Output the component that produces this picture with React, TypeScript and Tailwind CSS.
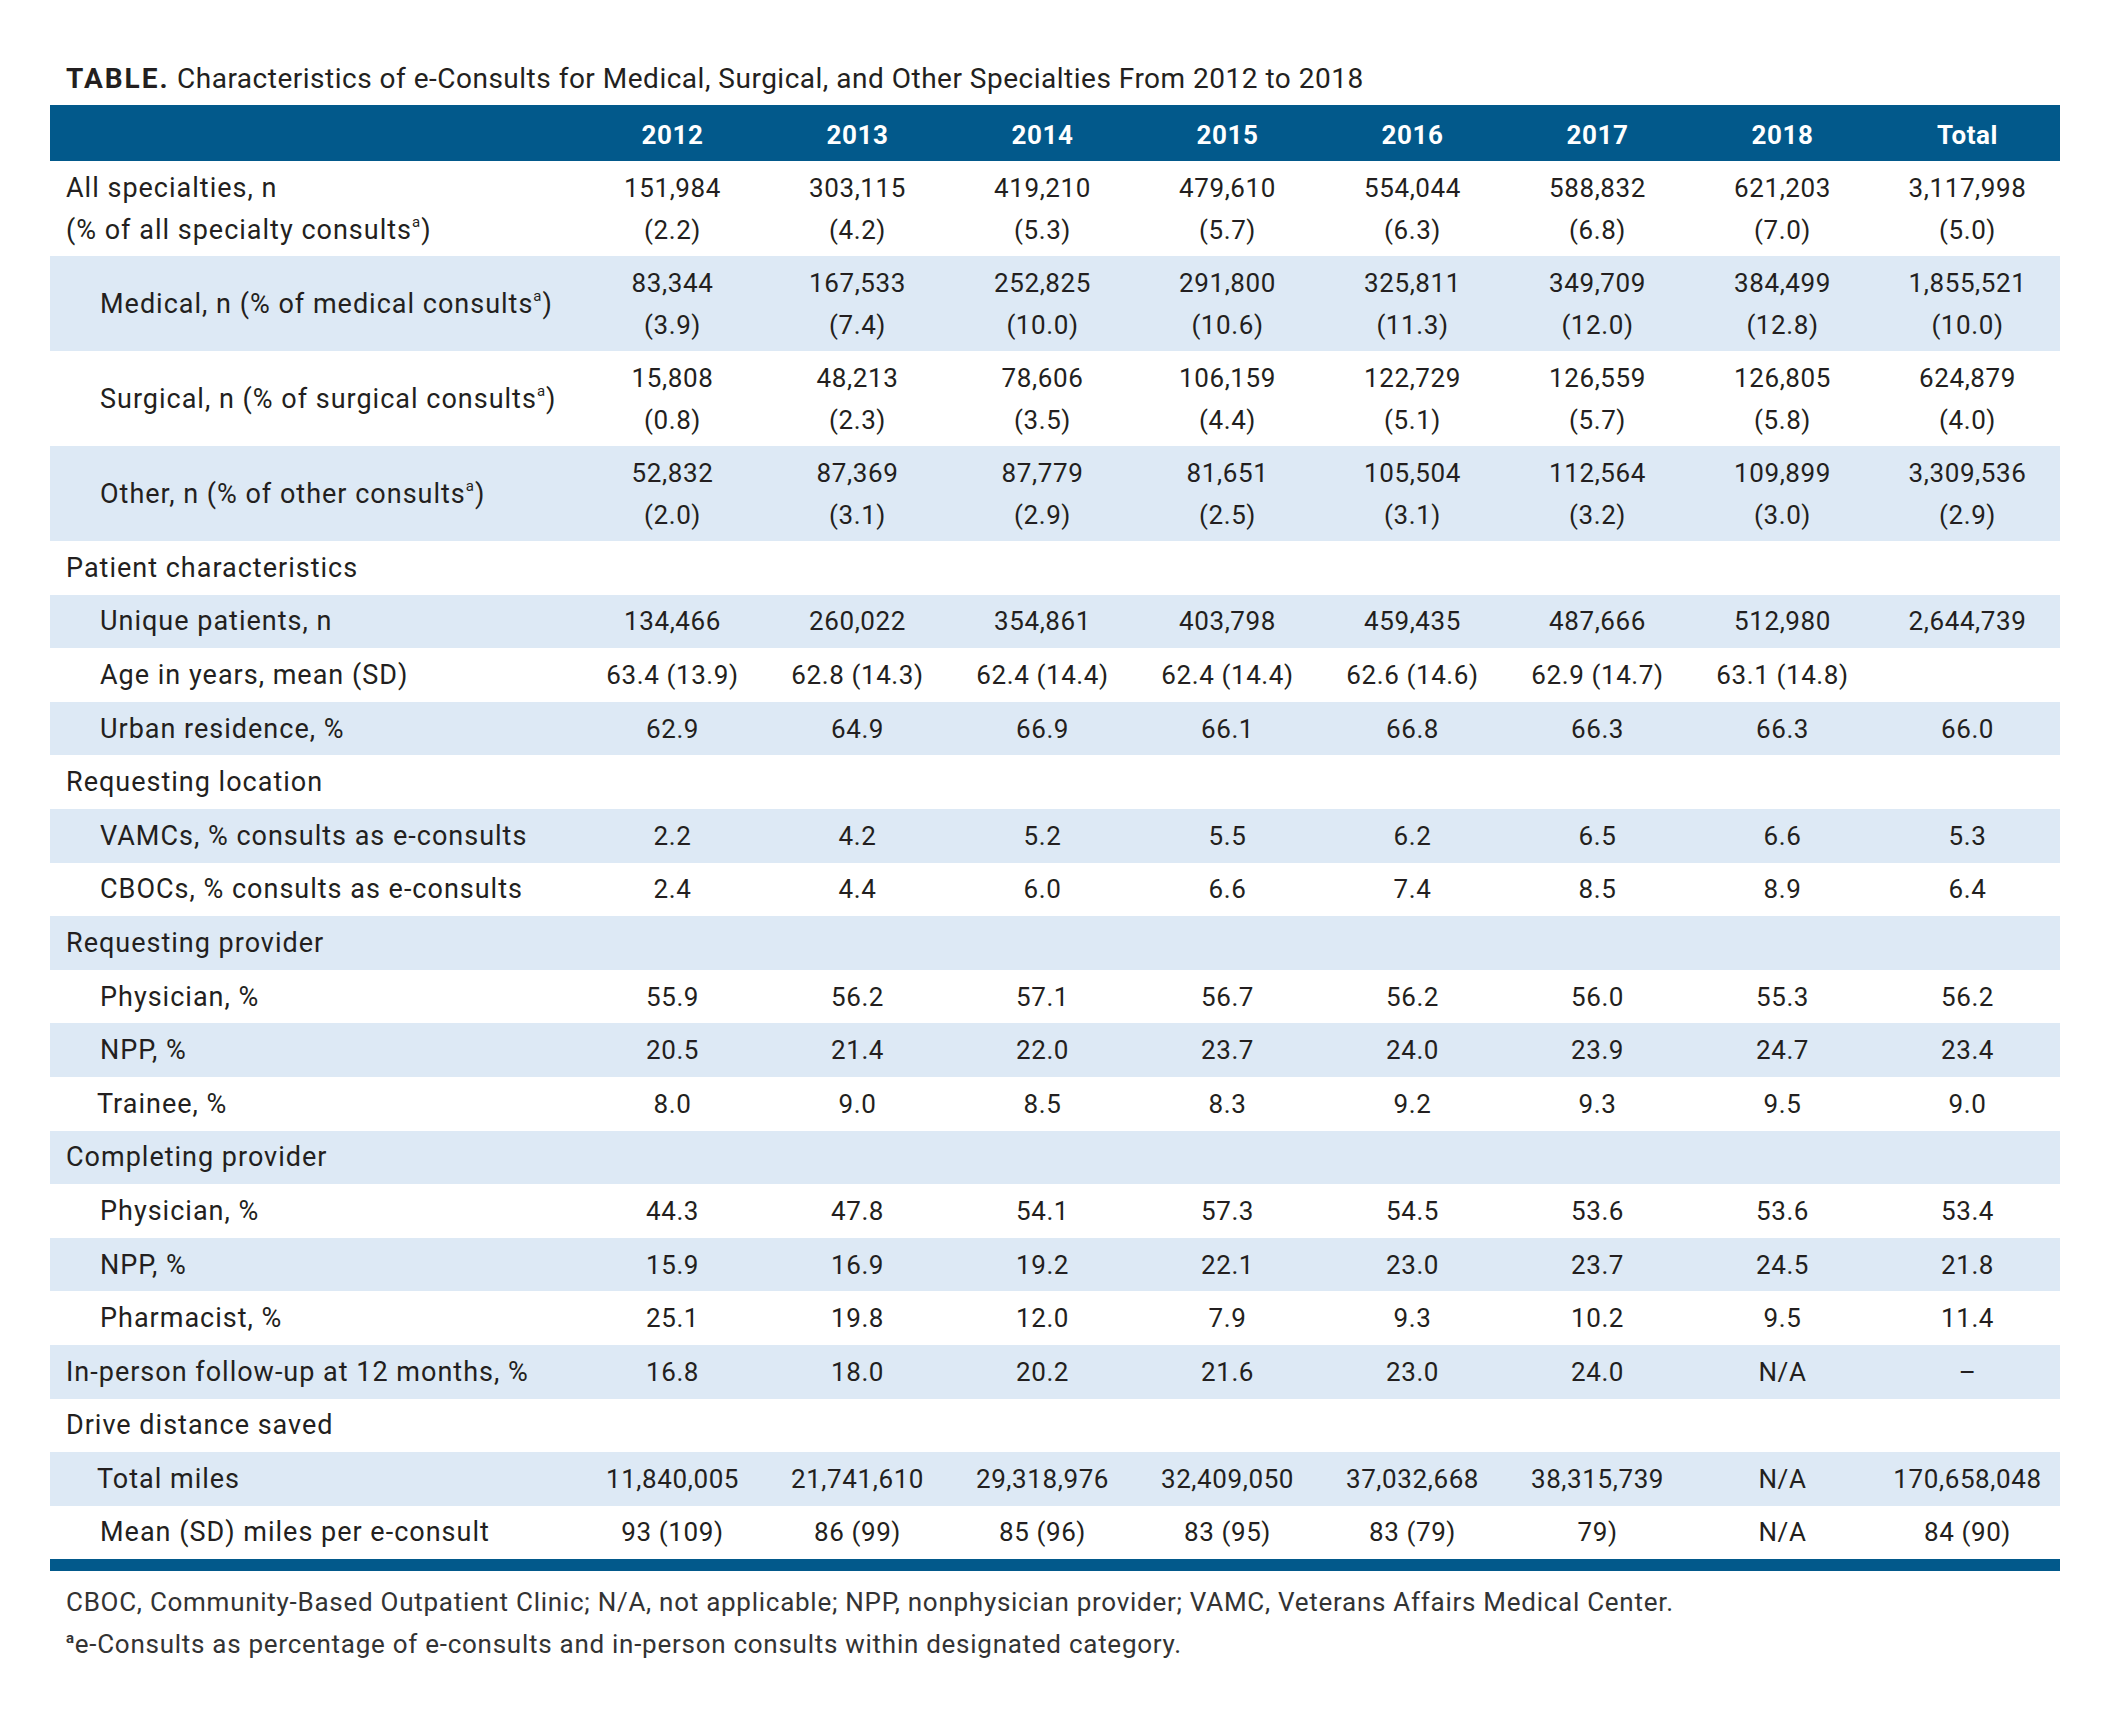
import React from 'react';

type Row = {
  label: React.ReactNode;
  values?: string[][];
  indent?: 'none' | 'sub' | 'subT';
  shaded?: boolean;
  tall?: boolean;
};

const years = ['2012', '2013', '2014', '2015', '2016', '2017', '2018', 'Total'];

const Sup = () => <sup className="text-[15px] top-[-0.75em]">a</sup>;

const rows: Row[] = [
  {
    label: (
      <>
        <div>All specialties, n</div>
        <div>
          (% of all specialty consults<Sup />)
        </div>
      </>
    ),
    tall: true,
    values: [
      ['151,984', '(2.2)'],
      ['303,115', '(4.2)'],
      ['419,210', '(5.3)'],
      ['479,610', '(5.7)'],
      ['554,044', '(6.3)'],
      ['588,832', '(6.8)'],
      ['621,203', '(7.0)'],
      ['3,117,998', '(5.0)'],
    ],
  },
  {
    label: (
      <div>
        Medical, n (% of medical consults<Sup />)
      </div>
    ),
    indent: 'sub',
    shaded: true,
    tall: true,
    values: [
      ['83,344', '(3.9)'],
      ['167,533', '(7.4)'],
      ['252,825', '(10.0)'],
      ['291,800', '(10.6)'],
      ['325,811', '(11.3)'],
      ['349,709', '(12.0)'],
      ['384,499', '(12.8)'],
      ['1,855,521', '(10.0)'],
    ],
  },
  {
    label: (
      <div>
        Surgical, n (% of surgical consults<Sup />)
      </div>
    ),
    indent: 'sub',
    tall: true,
    values: [
      ['15,808', '(0.8)'],
      ['48,213', '(2.3)'],
      ['78,606', '(3.5)'],
      ['106,159', '(4.4)'],
      ['122,729', '(5.1)'],
      ['126,559', '(5.7)'],
      ['126,805', '(5.8)'],
      ['624,879', '(4.0)'],
    ],
  },
  {
    label: (
      <div>
        Other, n (% of other consults<Sup />)
      </div>
    ),
    indent: 'sub',
    shaded: true,
    tall: true,
    values: [
      ['52,832', '(2.0)'],
      ['87,369', '(3.1)'],
      ['87,779', '(2.9)'],
      ['81,651', '(2.5)'],
      ['105,504', '(3.1)'],
      ['112,564', '(3.2)'],
      ['109,899', '(3.0)'],
      ['3,309,536', '(2.9)'],
    ],
  },
  { label: 'Patient characteristics' },
  {
    label: 'Unique patients, n',
    indent: 'sub',
    shaded: true,
    values: [['134,466'], ['260,022'], ['354,861'], ['403,798'], ['459,435'], ['487,666'], ['512,980'], ['2,644,739']],
  },
  {
    label: 'Age in years, mean (SD)',
    indent: 'sub',
    values: [
      ['63.4 (13.9)'],
      ['62.8 (14.3)'],
      ['62.4 (14.4)'],
      ['62.4 (14.4)'],
      ['62.6 (14.6)'],
      ['62.9 (14.7)'],
      ['63.1 (14.8)'],
      [''],
    ],
  },
  {
    label: 'Urban residence, %',
    indent: 'sub',
    shaded: true,
    values: [['62.9'], ['64.9'], ['66.9'], ['66.1'], ['66.8'], ['66.3'], ['66.3'], ['66.0']],
  },
  { label: 'Requesting location' },
  {
    label: 'VAMCs, % consults as e-consults',
    indent: 'sub',
    shaded: true,
    values: [['2.2'], ['4.2'], ['5.2'], ['5.5'], ['6.2'], ['6.5'], ['6.6'], ['5.3']],
  },
  {
    label: 'CBOCs, % consults as e-consults',
    indent: 'sub',
    values: [['2.4'], ['4.4'], ['6.0'], ['6.6'], ['7.4'], ['8.5'], ['8.9'], ['6.4']],
  },
  { label: 'Requesting provider', shaded: true },
  {
    label: 'Physician, %',
    indent: 'sub',
    values: [['55.9'], ['56.2'], ['57.1'], ['56.7'], ['56.2'], ['56.0'], ['55.3'], ['56.2']],
  },
  {
    label: 'NPP, %',
    indent: 'sub',
    shaded: true,
    values: [['20.5'], ['21.4'], ['22.0'], ['23.7'], ['24.0'], ['23.9'], ['24.7'], ['23.4']],
  },
  {
    label: 'Trainee, %',
    indent: 'subT',
    values: [['8.0'], ['9.0'], ['8.5'], ['8.3'], ['9.2'], ['9.3'], ['9.5'], ['9.0']],
  },
  { label: 'Completing provider', shaded: true },
  {
    label: 'Physician, %',
    indent: 'sub',
    values: [['44.3'], ['47.8'], ['54.1'], ['57.3'], ['54.5'], ['53.6'], ['53.6'], ['53.4']],
  },
  {
    label: 'NPP, %',
    indent: 'sub',
    shaded: true,
    values: [['15.9'], ['16.9'], ['19.2'], ['22.1'], ['23.0'], ['23.7'], ['24.5'], ['21.8']],
  },
  {
    label: 'Pharmacist, %',
    indent: 'sub',
    values: [['25.1'], ['19.8'], ['12.0'], ['7.9'], ['9.3'], ['10.2'], ['9.5'], ['11.4']],
  },
  {
    label: 'In-person follow-up at 12 months, %',
    shaded: true,
    values: [['16.8'], ['18.0'], ['20.2'], ['21.6'], ['23.0'], ['24.0'], ['N/A'], ['–']],
  },
  { label: 'Drive distance saved' },
  {
    label: 'Total miles',
    indent: 'subT',
    shaded: true,
    values: [
      ['11,840,005'],
      ['21,741,610'],
      ['29,318,976'],
      ['32,409,050'],
      ['37,032,668'],
      ['38,315,739'],
      ['N/A'],
      ['170,658,048'],
    ],
  },
  {
    label: 'Mean (SD) miles per e-consult',
    indent: 'sub',
    values: [['93 (109)'], ['86 (99)'], ['85 (96)'], ['83 (95)'], ['83 (79)'], ['79)'], ['N/A'], ['84 (90)']],
  },
];

function indentClass(indent: Row['indent']) {
  switch (indent) {
    case 'sub':
      return 'pl-[50px]';
    case 'subT':
      return 'pl-[47px]';
    default:
      return 'pl-[16px]';
  }
}

function TableRow({ row }: { row: Row }) {
  return (
    <div
      className={`grid grid-cols-[530px_repeat(8,185px)] ${row.tall ? 'h-[95px]' : 'h-[53.6px]'} ${
        row.shaded ? 'bg-[#dde9f5]' : 'bg-white'
      }`}
    >
      <div
        className={`flex flex-col justify-center leading-[42px] text-[27px] tracking-[1px] whitespace-nowrap ${indentClass(
          row.indent
        )}`}
      >
        {row.label}
      </div>
      {(row.values ?? years.map(() => [''])).map((cell, i) => (
        <div key={i} className="flex flex-col items-center justify-center leading-[42px] whitespace-nowrap">
          {cell.map((line, j) => (
            <div key={j}>{line}</div>
          ))}
        </div>
      ))}
    </div>
  );
}

export default function App() {
  return (
    <div className="w-[2110px] h-[1719px] bg-white text-[#231f20] font-['Roboto',sans-serif] pt-[61px]">
      <div className="pl-[66px] h-[36px] leading-[36px] text-[28px] mb-[8px] tracking-[0.5px]">
        <span className="font-bold tracking-[2px]">TABLE.</span> Characteristics of e-Consults for Medical, Surgical,
        and Other Specialties From 2012 to 2018
      </div>

      <div className="ml-[50px] w-[2010px] text-[26px] tracking-[0.6px]">
        <div className="grid grid-cols-[530px_repeat(8,185px)] h-[56px] bg-[#02598b] text-white font-bold">
          <div />
          {years.map((y) => (
            <div key={y} className="flex items-center justify-center pt-[4px]">
              {y}
            </div>
          ))}
        </div>

        {rows.map((row, i) => (
          <TableRow key={i} row={row} />
        ))}

        <div className="h-[12px] bg-[#02598b]" />
      </div>

      <div className="pl-[66px] pt-[10px] text-[26px] leading-[42px] text-[#333333] tracking-[0.73px]">
        <p>
          CBOC, Community-Based Outpatient Clinic; N/A, not applicable; NPP, nonphysician provider; VAMC, Veterans
          Affairs Medical Center.
        </p>
        <p>
          <sup className="text-[15px] font-bold top-[-0.7em]">a</sup>e-Consults as percentage of e-consults and
          in-person consults within designated category.
        </p>
      </div>
    </div>
  );
}
